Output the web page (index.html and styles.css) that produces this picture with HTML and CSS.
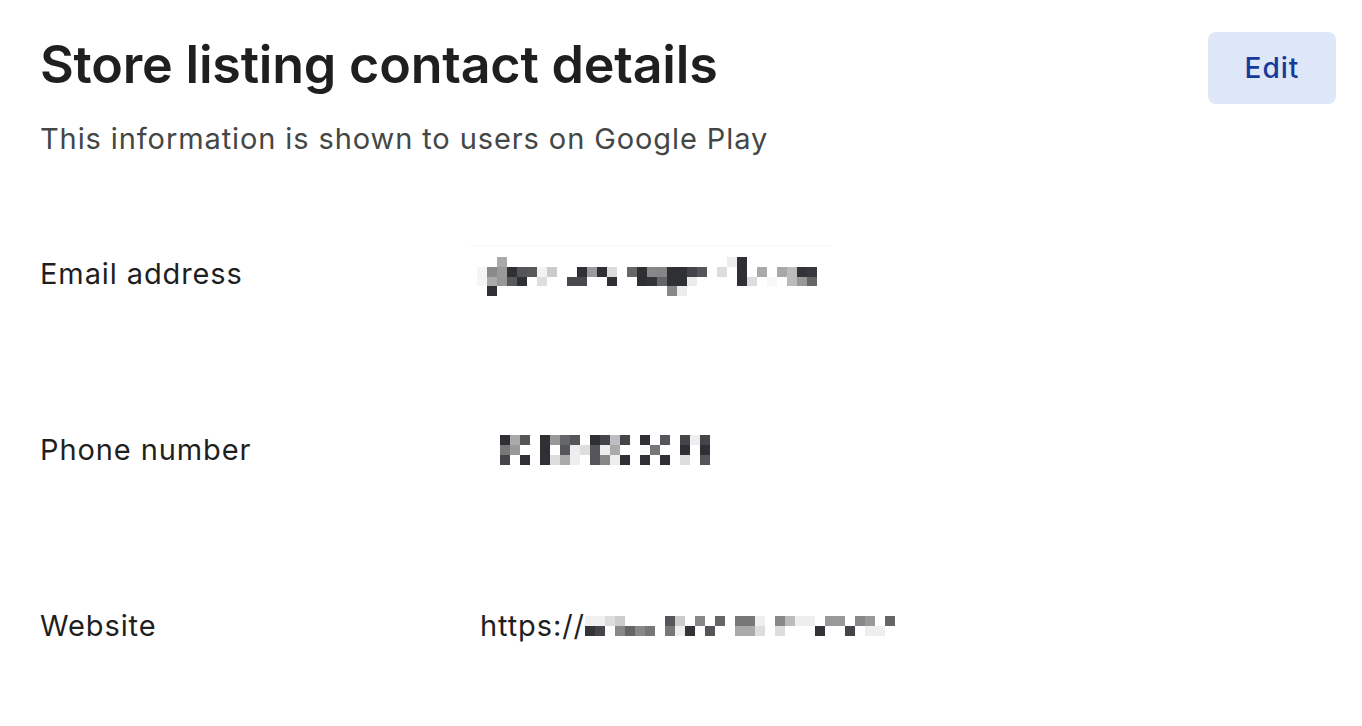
FILE: index.html
```html
<!DOCTYPE html>
<html>
<head>
<meta charset="utf-8">
<link rel="stylesheet" href="styles.css">
</head>
<body>
<div class="page">
  <header class="header">
    <div class="titles">
      <h1 class="title">Store listing contact details</h1>
      <p class="subtitle">This information is shown to users on Google Play</p>
    </div>
    <button class="edit-btn">Edit</button>
  </header>
  <div class="rows">
    <div class="row">
      <div class="label">Email address</div>
      <div class="value">
        <svg class="mosaic email" width="370" height="52" viewBox="0 0 370 52" shape-rendering="crispEdges">
          <rect x="0" y="0" width="360" height="1" fill="#f6f6f6"/>
          <g transform="translate(7,12)">
            <rect x="20" y="0" width="10" height="10" fill="#a9a9a9"/>
            <rect x="250" y="0" width="10" height="10" fill="#ededed"/>
            <rect x="260" y="0" width="10" height="10" fill="#2f3033"/>
            <rect x="0" y="10" width="10" height="10" fill="#f5f5f5"/>
            <rect x="10" y="10" width="10" height="10" fill="#8a8a8a"/>
            <rect x="20" y="10" width="10" height="10" fill="#999"/>
            <rect x="30" y="10" width="10" height="10" fill="#2f3033"/>
            <rect x="40" y="10" width="10" height="10" fill="#545557"/>
            <rect x="50" y="10" width="10" height="10" fill="#58595b"/>
            <rect x="60" y="10" width="10" height="10" fill="#f3f3f3"/>
            <rect x="70" y="10" width="10" height="10" fill="#cbcbcb"/>
            <rect x="100" y="10" width="10" height="10" fill="#2f3033"/>
            <rect x="110" y="10" width="10" height="10" fill="#9a9a9a"/>
            <rect x="120" y="10" width="10" height="10" fill="#2f3033"/>
            <rect x="130" y="10" width="10" height="10" fill="#dcdcdc"/>
            <rect x="150" y="10" width="10" height="10" fill="#666768"/>
            <rect x="160" y="10" width="10" height="10" fill="#2f3033"/>
            <rect x="170" y="10" width="10" height="10" fill="#888"/>
            <rect x="180" y="10" width="10" height="10" fill="#858585"/>
            <rect x="190" y="10" width="10" height="10" fill="#2f3033"/>
            <rect x="200" y="10" width="10" height="10" fill="#2f3033"/>
            <rect x="210" y="10" width="10" height="10" fill="#444548"/>
            <rect x="220" y="10" width="10" height="10" fill="#555659"/>
            <rect x="240" y="10" width="10" height="10" fill="#dddddd"/>
            <rect x="260" y="10" width="10" height="10" fill="#2f3033"/>
            <rect x="280" y="10" width="10" height="10" fill="#aaaaaa"/>
            <rect x="300" y="10" width="10" height="10" fill="#a8a8a8"/>
            <rect x="310" y="10" width="10" height="10" fill="#bcbcbc"/>
            <rect x="320" y="10" width="10" height="10" fill="#333437"/>
            <rect x="330" y="10" width="10" height="10" fill="#38393c"/>
            <rect x="0" y="20" width="10" height="9" fill="#f5f5f5"/>
            <rect x="10" y="20" width="10" height="9" fill="#aaaaaa"/>
            <rect x="20" y="20" width="10" height="9" fill="#979797"/>
            <rect x="30" y="20" width="10" height="9" fill="#58595b"/>
            <rect x="40" y="20" width="10" height="9" fill="#2f3033"/>
            <rect x="60" y="20" width="10" height="9" fill="#dedede"/>
            <rect x="90" y="20" width="10" height="9" fill="#48494c"/>
            <rect x="100" y="20" width="10" height="9" fill="#48494c"/>
            <rect x="130" y="20" width="10" height="9" fill="#2f3033"/>
            <rect x="160" y="20" width="10" height="9" fill="#2f3033"/>
            <rect x="170" y="20" width="10" height="9" fill="#333437"/>
            <rect x="180" y="20" width="10" height="9" fill="#656668"/>
            <rect x="190" y="20" width="10" height="9" fill="#2f3033"/>
            <rect x="200" y="20" width="10" height="9" fill="#2f3033"/>
            <rect x="210" y="20" width="10" height="9" fill="#ececec"/>
            <rect x="260" y="20" width="10" height="9" fill="#2f3033"/>
            <rect x="270" y="20" width="10" height="9" fill="#dcdcdc"/>
            <rect x="290" y="20" width="10" height="9" fill="#f8f8f8"/>
            <rect x="310" y="20" width="10" height="9" fill="#bbbbbb"/>
            <rect x="320" y="20" width="10" height="9" fill="#999999"/>
            <rect x="330" y="20" width="10" height="9" fill="#666666"/>
            <rect x="10" y="29" width="10" height="10" fill="#2f3033"/>
            <rect x="190" y="29" width="10" height="10" fill="#888888"/>
            <rect x="200" y="29" width="10" height="10" fill="#ececec"/>
          </g>
        </svg>
      </div>
    </div>
    <div class="row">
      <div class="label">Phone number</div>
      <div class="value">
        <svg class="mosaic phone" width="210" height="30" viewBox="0 0 210 30" shape-rendering="crispEdges">
          <rect x="0" y="0" width="10" height="10" fill="#2f3033"/>
          <rect x="10" y="0" width="10" height="10" fill="#aaaaaa"/>
          <rect x="20" y="0" width="10" height="10" fill="#555659"/>
          <rect x="40" y="0" width="10" height="10" fill="#2f3033"/>
          <rect x="50" y="0" width="10" height="10" fill="#999999"/>
          <rect x="60" y="0" width="10" height="10" fill="#66676a"/>
          <rect x="70" y="0" width="10" height="10" fill="#555659"/>
          <rect x="90" y="0" width="10" height="10" fill="#2f3033"/>
          <rect x="100" y="0" width="10" height="10" fill="#444548"/>
          <rect x="110" y="0" width="10" height="10" fill="#bcbec2"/>
          <rect x="120" y="0" width="10" height="10" fill="#444548"/>
          <rect x="140" y="0" width="10" height="10" fill="#2f3033"/>
          <rect x="160" y="0" width="10" height="10" fill="#555659"/>
          <rect x="180" y="0" width="10" height="10" fill="#444548"/>
          <rect x="190" y="0" width="10" height="10" fill="#eeeeee"/>
          <rect x="200" y="0" width="10" height="10" fill="#444548"/>
          <rect x="0" y="10" width="10" height="10" fill="#777777"/>
          <rect x="10" y="10" width="10" height="10" fill="#999999"/>
          <rect x="40" y="10" width="10" height="10" fill="#2f3033"/>
          <rect x="60" y="10" width="10" height="10" fill="#555659"/>
          <rect x="70" y="10" width="10" height="10" fill="#eeeeee"/>
          <rect x="80" y="10" width="10" height="10" fill="#dddddd"/>
          <rect x="90" y="10" width="10" height="10" fill="#555659"/>
          <rect x="100" y="10" width="10" height="10" fill="#eeeeee"/>
          <rect x="110" y="10" width="10" height="10" fill="#aaaaaa"/>
          <rect x="140" y="10" width="10" height="10" fill="#fafafa"/>
          <rect x="150" y="10" width="10" height="10" fill="#777777"/>
          <rect x="180" y="10" width="10" height="10" fill="#2f3033"/>
          <rect x="200" y="10" width="10" height="10" fill="#2f3033"/>
          <rect x="0" y="20" width="10" height="10" fill="#444548"/>
          <rect x="20" y="20" width="10" height="10" fill="#2f3033"/>
          <rect x="40" y="20" width="10" height="10" fill="#2f3033"/>
          <rect x="50" y="20" width="10" height="10" fill="#dddddd"/>
          <rect x="60" y="20" width="10" height="10" fill="#aaaaaa"/>
          <rect x="70" y="20" width="10" height="10" fill="#eeeeee"/>
          <rect x="90" y="20" width="10" height="10" fill="#555659"/>
          <rect x="100" y="20" width="10" height="10" fill="#888888"/>
          <rect x="110" y="20" width="10" height="10" fill="#eeeeee"/>
          <rect x="120" y="20" width="10" height="10" fill="#2f3033"/>
          <rect x="140" y="20" width="10" height="10" fill="#2f3033"/>
          <rect x="160" y="20" width="10" height="10" fill="#2f3033"/>
          <rect x="180" y="20" width="10" height="10" fill="#dddddd"/>
          <rect x="200" y="20" width="10" height="10" fill="#555659"/>
        </svg>
      </div>
    </div>
    <div class="row">
      <div class="label">Website</div>
      <div class="value url"><span class="url-text">https://</span><svg class="mosaic web" width="310" height="20" viewBox="0 0 310 20" shape-rendering="crispEdges">
          <rect x="0" y="0" width="10" height="10" fill="#f0f0f0"/>
          <rect x="10" y="0" width="10" height="10" fill="#f0f0f0"/>
          <rect x="20" y="0" width="10" height="10" fill="#dddddd"/>
          <rect x="30" y="0" width="10" height="10" fill="#cccccc"/>
          <rect x="80" y="0" width="10" height="10" fill="#555659"/>
          <rect x="90" y="0" width="10" height="10" fill="#cccccc"/>
          <rect x="110" y="0" width="10" height="10" fill="#888888"/>
          <rect x="130" y="0" width="10" height="10" fill="#666666"/>
          <rect x="150" y="0" width="10" height="10" fill="#777777"/>
          <rect x="160" y="0" width="10" height="10" fill="#777777"/>
          <rect x="170" y="0" width="10" height="10" fill="#eeeeee"/>
          <rect x="190" y="0" width="10" height="10" fill="#888888"/>
          <rect x="200" y="0" width="10" height="10" fill="#bbbbbb"/>
          <rect x="210" y="0" width="10" height="10" fill="#eeeeee"/>
          <rect x="220" y="0" width="10" height="10" fill="#eeeeee"/>
          <rect x="240" y="0" width="10" height="10" fill="#999999"/>
          <rect x="250" y="0" width="10" height="10" fill="#999999"/>
          <rect x="270" y="0" width="10" height="10" fill="#888888"/>
          <rect x="280" y="0" width="10" height="10" fill="#999999"/>
          <rect x="300" y="0" width="10" height="10" fill="#666666"/>
          <rect x="0" y="10" width="10" height="10" fill="#333437"/>
          <rect x="10" y="10" width="10" height="10" fill="#444548"/>
          <rect x="30" y="10" width="10" height="10" fill="#888888"/>
          <rect x="40" y="10" width="10" height="10" fill="#666666"/>
          <rect x="50" y="10" width="10" height="10" fill="#888888"/>
          <rect x="60" y="10" width="10" height="10" fill="#777777"/>
          <rect x="80" y="10" width="10" height="10" fill="#777777"/>
          <rect x="90" y="10" width="10" height="10" fill="#eeeeee"/>
          <rect x="100" y="10" width="10" height="10" fill="#333437"/>
          <rect x="120" y="10" width="10" height="10" fill="#555659"/>
          <rect x="150" y="10" width="10" height="10" fill="#aaaaaa"/>
          <rect x="160" y="10" width="10" height="10" fill="#aaaaaa"/>
          <rect x="170" y="10" width="10" height="10" fill="#dddddd"/>
          <rect x="190" y="10" width="10" height="10" fill="#dddddd"/>
          <rect x="230" y="10" width="10" height="10" fill="#333437"/>
          <rect x="260" y="10" width="10" height="10" fill="#444548"/>
          <rect x="280" y="10" width="10" height="10" fill="#eeeeee"/>
          <rect x="290" y="10" width="10" height="10" fill="#eeeeee"/>
        </svg></div>
    </div>
  </div>
</div>
</body>
</html>
```

FILE: styles.css
```css
* { box-sizing: border-box; }
html, body { margin: 0; padding: 0; background: #ffffff; }
body {
  font-family: "Inter", "Roboto", "Liberation Sans", sans-serif;
  color: #1f1f1f;
}
.page {
  width: 1362px;
  height: 726px;
  padding: 32px 26px 0 40px;
  overflow: hidden;
}
.header {
  display: flex;
  justify-content: space-between;
  align-items: flex-start;
}
.title {
  margin: 0;
  font-size: 52px;
  font-weight: 600;
  line-height: 66px;
  letter-spacing: -0.2px;
  color: #1f1f1f;
}
.subtitle {
  margin: 21px 0 0;
  font-size: 29px;
  line-height: 40px;
  letter-spacing: 0.9px;
  color: #444746;
}
.edit-btn {
  width: 128px;
  height: 72px;
  border: none;
  border-radius: 8px;
  background: #dde7f8;
  color: #163a9a;
  font-family: inherit;
  font-size: 28px;
  font-weight: 500;
  letter-spacing: 1px;
  padding: 0;
  cursor: pointer;
}
.rows {
  margin-top: 27px;
}
.row {
  display: grid;
  grid-template-columns: 440px 1fr;
  align-items: center;
  height: 176px;
}
.label {
  font-size: 29px;
  line-height: 40px;
  letter-spacing: 0.9px;
  color: #1f1f1f;
}
.value {
  display: flex;
  align-items: center;
}
.mosaic { display: block; }
.mosaic.email { margin-left: -10px; margin-top: -6px; }
.mosaic.phone { margin-left: 20px; }
.url-text {
  font-size: 29px;
  line-height: 40px;
  letter-spacing: 0.9px;
  color: #1f1f1f;
}
.mosaic.web { margin-top: 0; }
```
